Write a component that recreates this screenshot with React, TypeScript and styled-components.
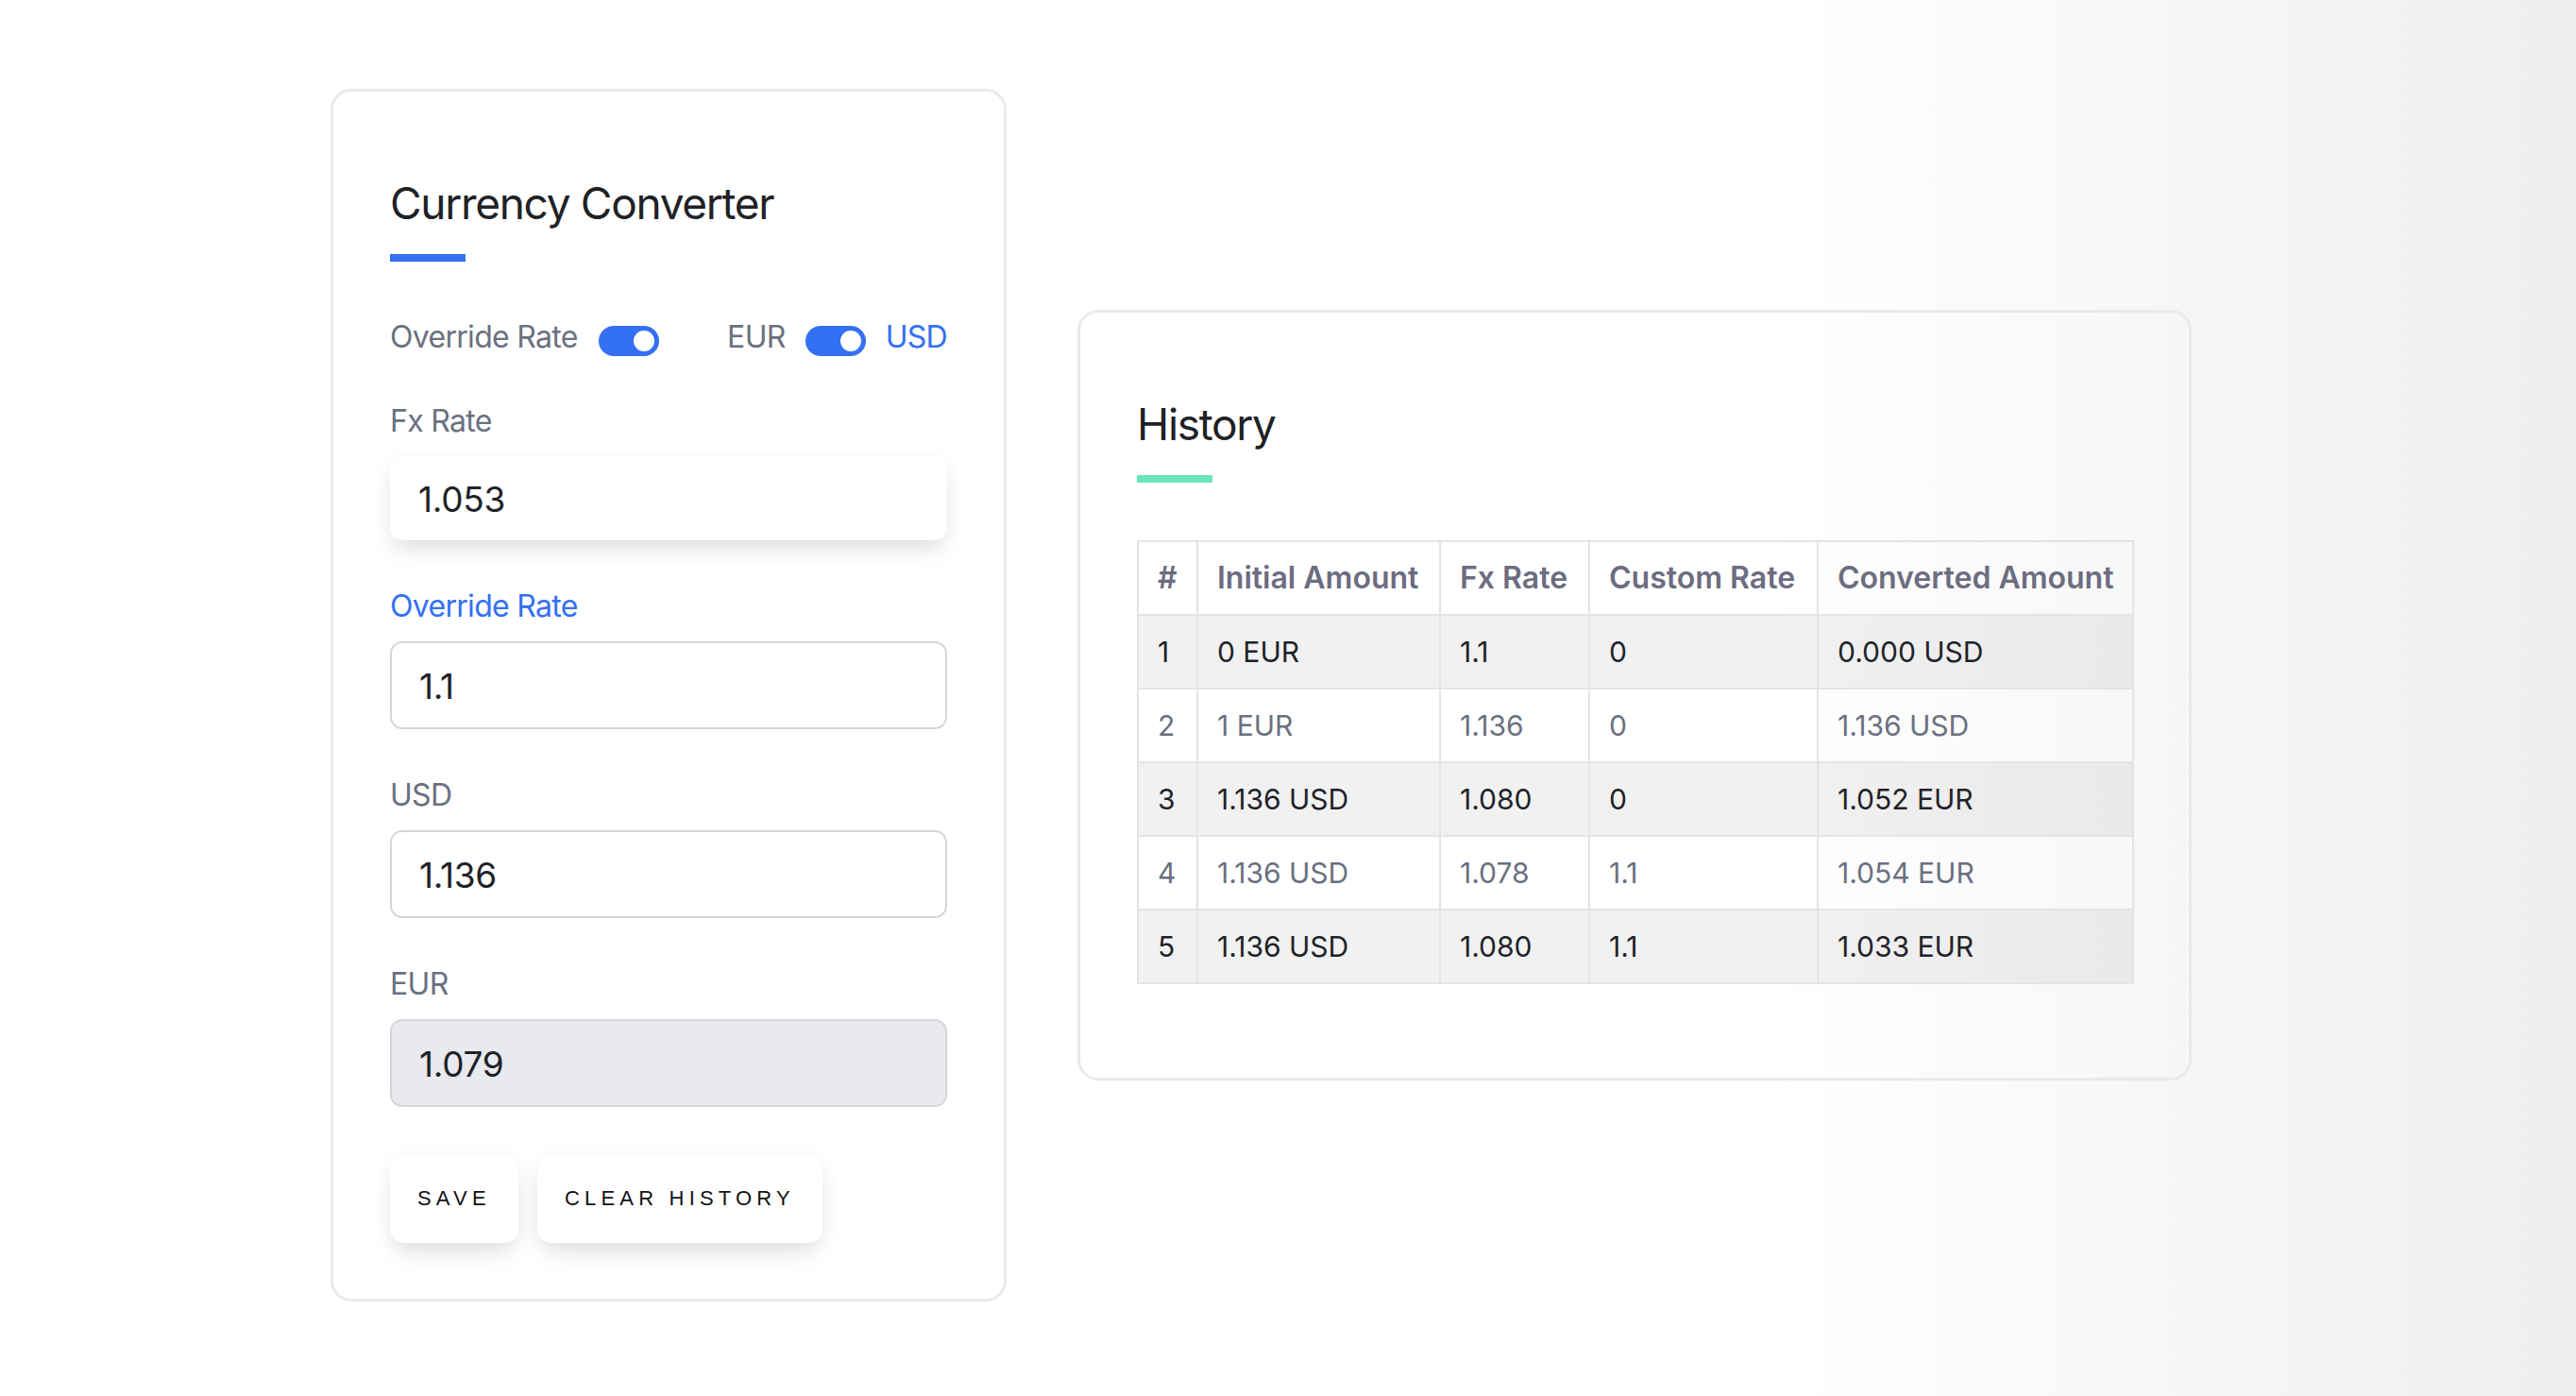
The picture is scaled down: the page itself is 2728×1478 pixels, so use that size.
import React from "react";
import styled, { createGlobalStyle } from "styled-components";

const BLUE = "#3470f3";
const GREEN = "#6ae5c0";
const LABEL_GRAY = "#6b7080";
const INK = "#1f2328";

const GlobalStyle = createGlobalStyle`
  html, body { margin: 0; padding: 0; }
  * { box-sizing: border-box; }
  body {
    min-height: 100vh;
    background: linear-gradient(90deg, #ffffff 0%, #ffffff 69%, #eeeeee 100%);
    font-family: Inter, "Noto Sans", sans-serif;
    color: ${INK};
  }
`;

const Page = styled.main`
  min-height: 100vh;
  display: flex;
  align-items: center;
  gap: 75px;
  padding: 0 0 7px 350px;
`;

const Card = styled.section<{ $width: number; $padBottom: number }>`
  width: ${(p) => p.$width}px;
  border: 3px solid #e9e9ef;
  border-radius: 22px;
  padding: 90px 60px ${(p) => p.$padBottom}px;
  display: flex;
  flex-direction: column;
  align-items: stretch;
`;

const Title = styled.h1`
  margin: 0;
  font-size: 46px;
  line-height: 56px;
  font-weight: 400;
  color: #202226;
  letter-spacing: -1.3px;
`;

const AccentBar = styled.div<{ $color: string }>`
  width: 80px;
  height: 8px;
  margin-top: 26px;
  background: ${(p) => p.$color};
`;

const ToggleRow = styled.div`
  margin-top: 64px;
  display: flex;
  justify-content: space-between;
  align-items: flex-start;
`;

const ToggleGroup = styled.div<{ $gap: number }>`
  display: flex;
  align-items: flex-start;
  gap: ${(p) => p.$gap}px;
`;

const Text = styled.span<{ $color?: string }>`
  font-size: 32px;
  line-height: 32px;
  letter-spacing: -0.7px;
  color: ${(p) => p.$color ?? LABEL_GRAY};
  white-space: nowrap;
`;

const Toggle = styled.span`
  width: 64px;
  height: 32px;
  margin-top: 4px;
  border-radius: 16px;
  background: ${BLUE};
  display: flex;
  justify-content: flex-end;
  align-items: center;
  padding: 0 5px;
  flex: none;
`;

const Knob = styled.span`
  width: 22px;
  height: 22px;
  border-radius: 50%;
  background: #ffffff;
`;

const Fields = styled.div`
  margin-top: 53px;
  display: flex;
  flex-direction: column;
  gap: 54px;
`;

const Field = styled.label`
  display: flex;
  flex-direction: column;
  gap: 21px;
`;

type InputVariant = "raised" | "outline" | "disabled";

const Input = styled.input<{ $variant: InputVariant }>`
  width: 100%;
  height: ${(p) => (p.$variant === "raised" ? 89 : 93)}px;
  border: ${(p) => (p.$variant === "raised" ? "none" : "2px solid #d2d6dc")};
  border-radius: 13px;
  padding: 3px ${(p) => (p.$variant === "raised" ? 30 : 29)}px 0;
  background: ${(p) => (p.$variant === "disabled" ? "#e9eaee" : "#ffffff")};
  box-shadow: ${(p) =>
    p.$variant === "raised"
      ? "0 14px 26px -6px rgba(0,0,0,0.13), 0 0 22px rgba(0,0,0,0.035)"
      : "none"};
  font-family: Inter, "Noto Sans", sans-serif;
  font-size: 37px;
  letter-spacing: -0.3px;
  color: ${INK};
  outline: none;
  opacity: 1;
  -webkit-text-fill-color: ${INK};
`;

const ButtonRow = styled.div`
  margin-top: 51px;
  display: flex;
  gap: 20px;
`;

const Button = styled.button`
  height: 93px;
  padding: 0 29px;
  border: none;
  border-radius: 15px;
  background: #ffffff;
  box-shadow: 0 14px 26px -6px rgba(0,0,0,0.13), 0 0 22px rgba(0,0,0,0.035);
  font-family: "Liberation Sans", Arial, sans-serif;
  font-size: 22px;
  letter-spacing: 5.2px;
  text-transform: uppercase;
  color: #111111;
  cursor: pointer;
`;

const Table = styled.table`
  margin-top: 61px;
  width: 1054px;
  border-collapse: collapse;
  table-layout: fixed;
`;

const Th = styled.th`
  height: 78px;
  padding: 0 20px;
  border: 2px solid #e2e4e8;
  text-align: left;
  font-size: 32px;
  font-weight: 600;
  color: #6c6d80;
  white-space: nowrap;
`;

const Row = styled.tr<{ $striped: boolean }>`
  background: ${(p) => (p.$striped ? "rgba(0,0,0,0.055)" : "transparent")};
  color: ${(p) => (p.$striped ? INK : LABEL_GRAY)};
`;

const Td = styled.td`
  height: 78px;
  padding: 0 20px;
  border: 2px solid #e2e4e8;
  font-size: 30px;
  white-space: nowrap;
`;

const columns = [
  { label: "#", width: 63 },
  { label: "Initial Amount", width: 257 },
  { label: "Fx Rate", width: 158 },
  { label: "Custom Rate", width: 242 },
  { label: "Converted Amount", width: 334 },
];

const history = [
  ["1", "0 EUR", "1.1", "0", "0.000 USD"],
  ["2", "1 EUR", "1.136", "0", "1.136 USD"],
  ["3", "1.136 USD", "1.080", "0", "1.052 EUR"],
  ["4", "1.136 USD", "1.078", "1.1", "1.054 EUR"],
  ["5", "1.136 USD", "1.080", "1.1", "1.033 EUR"],
];

const fields: { label: string; value: string; variant: InputVariant; color?: string }[] = [
  { label: "Fx Rate", value: "1.053", variant: "raised" },
  { label: "Override Rate", value: "1.1", variant: "outline", color: BLUE },
  { label: "USD", value: "1.136", variant: "outline" },
  { label: "EUR", value: "1.079", variant: "disabled" },
];

export default function App() {
  return (
    <>
      <GlobalStyle />
      <Page>
        <Card $width={716} $padBottom={59}>
          <Title>Currency Converter</Title>
          <AccentBar $color={BLUE} />
          <ToggleRow>
            <ToggleGroup $gap={22}>
              <Text>Override Rate</Text>
              <Toggle>
                <Knob />
              </Toggle>
            </ToggleGroup>
            <ToggleGroup $gap={21}>
              <Text>EUR</Text>
              <Toggle>
                <Knob />
              </Toggle>
              <Text $color={BLUE}>USD</Text>
            </ToggleGroup>
          </ToggleRow>
          <Fields>
            {fields.map((f) => (
              <Field key={f.label}>
                <Text $color={f.color}>{f.label}</Text>
                <Input
                  $variant={f.variant}
                  value={f.value}
                  readOnly
                  disabled={f.variant === "disabled"}
                />
              </Field>
            ))}
          </Fields>
          <ButtonRow>
            <Button>Save</Button>
            <Button>Clear History</Button>
          </ButtonRow>
        </Card>
        <Card $width={1180} $padBottom={99}>
          <Title>History</Title>
          <AccentBar $color={GREEN} />
          <Table>
            <colgroup>
              {columns.map((c) => (
                <col key={c.label} style={{ width: c.width }} />
              ))}
            </colgroup>
            <thead>
              <tr>
                {columns.map((c) => (
                  <Th key={c.label}>{c.label}</Th>
                ))}
              </tr>
            </thead>
            <tbody>
              {history.map((r, i) => (
                <Row key={r[0]} $striped={i % 2 === 0}>
                  {r.map((cell, j) => (
                    <Td key={j}>{cell}</Td>
                  ))}
                </Row>
              ))}
            </tbody>
          </Table>
        </Card>
      </Page>
    </>
  );
}
